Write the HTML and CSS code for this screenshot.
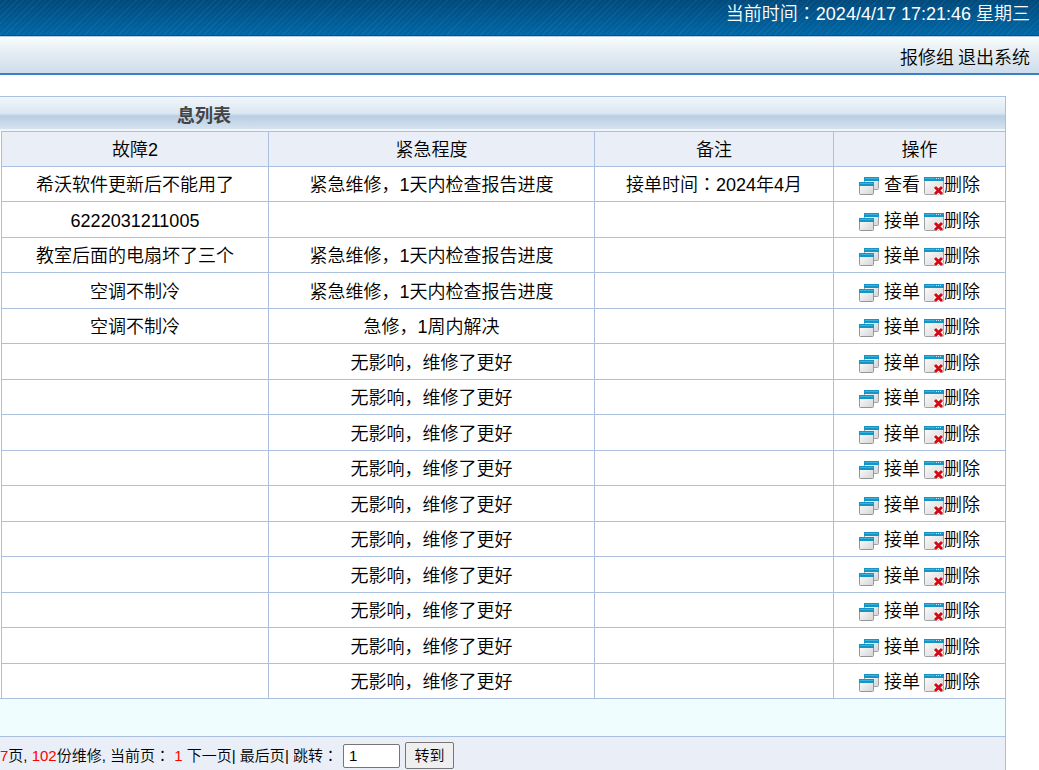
FILE: index.html
```html
<!DOCTYPE html>
<html lang="zh-CN">
<head>
  <meta charset="UTF-8">
  <meta name="viewport" content="width=device-width, initial-scale=1.0">
  <title>维修信息列表</title>
  <link rel="stylesheet" href="styles.css">
</head>
<body>
  <svg class="icon-defs" aria-hidden="true">
    <defs>
      <linearGradient id="pane" x1="0" y1="0" x2="1" y2="1">
        <stop offset="0" stop-color="#ffffff"/>
        <stop offset="1" stop-color="#d4d4d4"/>
      </linearGradient>
    </defs>
    <symbol id="icon-windows" viewBox="0 1 20 20">
      <rect x="5.5" y="1.5" width="14" height="12" rx="1" fill="url(#pane)" stroke="#a0a3a5"/>
      <path d="M5 1h15v4H5z" fill="#1794c4"/>
      <path d="M6 2h13v1H6z" fill="#35b2dd"/>
      <rect x="0.5" y="6.5" width="14" height="12" rx="1" fill="url(#pane)" stroke="#939698"/>
      <path d="M0 6h15v4H0z" fill="#1794c4"/>
      <path d="M1 7h13v1H1z" fill="#35b2dd"/>
    </symbol>
    <symbol id="icon-delete" viewBox="0 1 20 20">
      <rect x="0.5" y="1.5" width="19" height="17" rx="1" fill="url(#pane)" stroke="#a0a3a5"/>
      <path d="M0 1h20v4H0z" fill="#1794c4"/>
      <path d="M1 2h10v1H1z" fill="#35b2dd"/>
      <path d="M12 2h1v1h-1zM14 2h1v1h-1zM16 2h1v1h-1z" fill="#bfe8f7"/>
      <path d="M11 11l7 7M18 11l-7 7" stroke="#fff" stroke-width="5" fill="none"/>
      <path d="M11 11l7 7M18 11l-7 7" stroke="#d20a14" stroke-width="3" fill="none"/>
    </symbol>
  </svg>

  <header class="top">当前时间<span class="colon" lang="zh-TW">：</span>2024/4/17 17:21:46 星期三</header>
  <nav class="menu">
    <span>报修组</span>
    <a href="#">退出系统</a>
  </nav>

  <main class="panel">
    <h1 class="title">息列表</h1>
    <table class="list">
      <colgroup>
        <col class="col-fault">
        <col class="col-level">
        <col class="col-note">
        <col class="col-action">
      </colgroup>
      <thead>
        <tr><th>故障2</th><th>紧急程度</th><th>备注</th><th>操作</th></tr>
      </thead>
      <tbody id="rows"></tbody>
    </table>
    <div class="blank"></div>
    <form class="pager">
      <span><b>7</b>页, <b>102</b>份维修, 当前页<span class="colon" lang="zh-TW">：</span> <b>1</b> <a href="#">下一页</a>| <a href="#">最后页</a>| <label for="page">跳转<span class="colon" lang="zh-TW">：</span></label></span>
      <input type="text" id="page" value="1">
      <button type="button">转到</button>
    </form>
  </main>

  <script>
    const urgent = "紧急维修，1天内检查报告进度";
    const minor = "无影响，维修了更好";

    // fault, level, note, first action
    const repairs = [
      ["希沃软件更新后不能用了", urgent, '接单时间<span class="colon" lang="zh-TW">：</span>2024年4月', "查看"],
      ["6222031211005", "", "", "接单"],
      ["教室后面的电扇坏了三个", urgent, "", "接单"],
      ["空调不制冷", urgent, "", "接单"],
      ["空调不制冷", "急修，1周内解决", "", "接单"],
    ];
    for (let i = 0; i < 10; i++) {
      repairs.push(["", minor, "", "接单"]);
    }

    document.getElementById("rows").innerHTML = repairs.map(([fault, level, note, action]) => `
      <tr>
        <td>${fault}</td>
        <td>${level}</td>
        <td>${note}</td>
        <td>
          <div class="actions">
            <svg class="icon"><use href="#icon-windows"/></svg>
            <a href="#" class="accept">${action}</a>
            <svg class="icon"><use href="#icon-delete"/></svg>
            <a href="#">删除</a>
          </div>
        </td>
      </tr>`).join("");
  </script>
</body>
</html>
```
FILE: styles.css
```css
* {
  box-sizing: border-box;
}
body {
  margin: 0;
  font-family: "Liberation Sans", "Noto Sans CJK SC", sans-serif;
  font-size: 18px;
  font-weight: 350;
  line-height: 24px;
  color: #000;
  background: #fff;
  overflow: hidden;
}
a {
  color: inherit;
  text-decoration: none;
}
.colon {
  font-family: "Noto Sans CJK TC", sans-serif;
  line-height: 1;
}
.icon-defs {
  position: absolute;
  width: 0;
  height: 0;
}
.top {
  height: 36px;
  padding: 2px 9px 0;
  text-align: right;
  color: #fff;
  background:
    repeating-linear-gradient(135deg, rgba(255, 255, 255, 0.05) 0 1px, transparent 1px 4px),
    linear-gradient(#004a7c, #0067a6);
  border-bottom: 1px solid #07508c;
}
.menu {
  display: flex;
  justify-content: flex-end;
  gap: 4px;
  height: 39px;
  padding: 9px 9px 0;
  background: linear-gradient(#f9fcfd, #e2ebf2 50%, #cfdeea);
  border-top: 1px solid #b5cde0;
  border-bottom: 2px solid #3a7fcb;
}
.panel {
  margin: 21px 33px 0 0;
}
.title {
  height: 35px;
  margin: 0;
  padding: 7px 0 0 177px;
  font-size: 18px;
  font-weight: bold;
  line-height: 24px;
  color: #444;
  background: linear-gradient(#f2f7fb, #dae7f1 48%, #b9cee4 56%, #d5e2ef 94%, #f2f6fa 95%);
  border-top: 1px solid #abc0de;
  border-right: 1px solid #abc0de;
}
.list {
  width: 100%;
  table-layout: fixed;
  border-collapse: separate;
  border-spacing: 0;
  padding-left: 1px;
}
.col-fault {
  width: 26.57%;
}
.col-level {
  width: 32.44%;
}
.col-note {
  width: 23.78%;
}
.list th,
.list td {
  height: 35px;
  padding: 2px 0 0;
  text-align: center;
  border-top: 1px solid #abc0de;
  border-left: 1px solid #abc0de;
}
.list tr > :last-child {
  border-right: 1px solid #abc0de;
}
.list tbody tr:nth-child(even) td {
  height: 36px;
}
.list th {
  font-weight: 350;
  background: #eaeff7;
}
.actions {
  display: flex;
  justify-content: center;
  align-items: flex-end;
}
.accept {
  margin: 0 4px 0 5px;
}
.icon {
  width: 20px;
  height: 20px;
}
.blank {
  height: 38px;
  background: #f0fdff;
  border-top: 1px solid #abc0de;
  border-right: 1px solid #abc0de;
}
.pager {
  display: flex;
  align-items: center;
  gap: 5px;
  height: 38px;
  font-size: 15px;
  background: #eaeff7;
  border-top: 1px solid #abc0de;
  border-right: 1px solid #abc0de;
}
.pager b {
  font-weight: 350;
  color: #f00;
}
.pager input,
.pager button {
  font: inherit;
  color: #000;
  border: 1px solid #767676;
  border-radius: 2px;
}
.pager input {
  width: 57px;
  height: 24px;
  padding: 0 5px;
  background: #fff;
}
.pager button {
  width: 49px;
  height: 27px;
  padding: 0;
  background: #efefef;
}
```
